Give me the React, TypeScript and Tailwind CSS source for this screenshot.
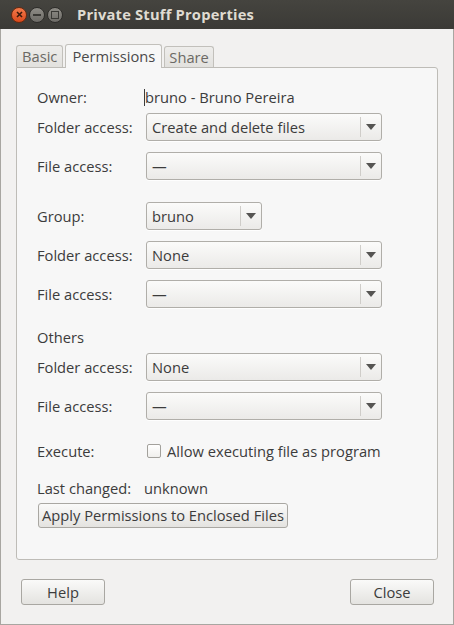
import React from 'react';

const font = { fontFamily: '"Open Sans", "Noto Sans", sans-serif' };

// little dropdown triangle used by the combo boxes
const Arrow = () => (
  <svg width="10" height="6" viewBox="0 0 10 6">
    <path d="M0 0h10L5 6z" fill="#555452" />
  </svg>
);

function Combo({ value, wide = true }: { value: string; wide?: boolean }) {
  return (
    <div
      className={`flex items-center h-[28px] ${wide ? 'w-[236px]' : 'w-[116px]'} rounded-[3px] border border-[#b0aea9] bg-gradient-to-b from-[#fbfbfa] to-[#ebeae8] shadow-[0_1px_0_rgba(255,255,255,0.8)]`}
    >
      <span className="flex-1 pl-[5px] text-[14.7px] text-[#3c3c3c] truncate">{value}</span>
      <span className="w-px h-[20px] bg-[#cfcdc9]" />
      <span className="w-[20px] flex items-center justify-center">
        <Arrow />
      </span>
    </div>
  );
}

function Row({ label, children, className = '' }: { label: string; children?: React.ReactNode; className?: string }) {
  return (
    <div className={`flex items-center ${className}`}>
      <div className="w-[109px] shrink-0 text-[14.7px] text-[#3c3c3c]">{label}</div>
      {children}
    </div>
  );
}

function WinBtn({ kind }: { kind: 'close' | 'min' | 'max' }) {
  if (kind === 'close') {
    return (
      <div className="w-[16px] h-[16px] rounded-full bg-gradient-to-b from-[#f37a4a] to-[#d9481a] border border-[#6a2a10] flex items-center justify-center">
        <svg width="7" height="7" viewBox="0 0 7 7">
          <path d="M1 1l5 5M6 1L1 6" stroke="#3a1a0c" strokeWidth="1.6" />
        </svg>
      </div>
    );
  }
  return (
    <div className="w-[16px] h-[16px] rounded-full bg-gradient-to-b from-[#8e8c86] to-[#6d6b66] border border-[#2e2d2a] flex items-center justify-center">
      {kind === 'min' ? (
        <div className="w-[8px] h-[2px] bg-[#3a3935]" />
      ) : (
        <div className="w-[8px] h-[8px] border-[1.5px] border-[#3a3935]" />
      )}
    </div>
  );
}

function Btn({ children, className = '' }: { children: React.ReactNode; className?: string }) {
  return (
    <div
      className={`flex items-center justify-center rounded-[3px] border border-[#a9a7a2] bg-gradient-to-b from-[#fafaf9] to-[#e4e3e0] text-[14.7px] text-[#3c3c3c] ${className}`}
    >
      {children}
    </div>
  );
}

export default function App() {
  return (
    <div className="w-[454px] h-[625px] flex flex-col bg-[#f2f1f0] overflow-hidden" style={font}>
      {/* title bar */}
      <div className="h-[29px] shrink-0 flex items-center bg-gradient-to-b from-[#45443f] to-[#3b3a36]">
        <div className="flex items-center gap-[2px] pl-[11px]">
          <WinBtn kind="close" />
          <WinBtn kind="min" />
          <WinBtn kind="max" />
        </div>
        <div className="ml-[14px] text-[14.7px] font-bold tracking-[0.2px] text-[#dfdbd2]">Private Stuff Properties</div>
      </div>

      <div className="flex-1 flex flex-col border-x border-b border-[#a8a6a1]">
        {/* tabs */}
        <div className="flex items-end h-[38px] pl-[15px] gap-[2px]">
          <div className="h-[22px] px-[5px] flex items-center rounded-t-[3px] border border-b-0 border-[#c2c0bb] bg-gradient-to-b from-[#eeedeb] to-[#e2e1de] text-[14.7px] text-[#6b6964]">
            Basic
          </div>
          <div className="relative z-10 h-[24px] mb-[-1px] px-[6px] flex items-center rounded-t-[3px] border border-b-0 border-[#c2c0bb] bg-[#f7f7f7] text-[14.7px] text-[#4a4a4a]">
            Permissions
          </div>
          <div className="h-[21px] px-[4px] flex items-center rounded-t-[3px] border border-b-0 border-[#c2c0bb] bg-gradient-to-b from-[#eeedeb] to-[#e2e1de] text-[14.7px] text-[#6b6964]">
            Share
          </div>
        </div>

        {/* permissions page */}
        <div className="mx-[15px] h-[493px] rounded-b-[3px] rounded-tr-[3px] border border-[#bebcb7] bg-[#f7f7f7] pl-[20px] pt-[18px]">
          <Row label="Owner:" className="h-[22px]">
            <div className="flex items-center text-[14.7px] text-[#3c3c3c] ml-[-2px]">
              <span className="w-px h-[17px] bg-[#3c3c3c]" />
              <span>bruno - Bruno Pereira</span>
            </div>
          </Row>
          <Row label="Folder access:" className="mt-[5px]">
            <Combo value="Create and delete files" />
          </Row>
          <Row label="File access:" className="mt-[11px]">
            <Combo value="—" />
          </Row>

          <Row label="Group:" className="mt-[22px]">
            <Combo value="bruno" wide={false} />
          </Row>
          <Row label="Folder access:" className="mt-[11px]">
            <Combo value="None" />
          </Row>
          <Row label="File access:" className="mt-[11px]">
            <Combo value="—" />
          </Row>

          <Row label="Others" className="mt-[18px] h-[22px]" />
          <Row label="Folder access:" className="mt-[5px]">
            <Combo value="None" />
          </Row>
          <Row label="File access:" className="mt-[11px]">
            <Combo value="—" />
          </Row>

          <Row label="Execute:" className="mt-[20px] h-[22px]">
            <div className="flex items-center gap-[6px] ml-[1px]">
              <div className="w-[14px] h-[14px] rounded-[2px] border border-[#a3a19c] bg-gradient-to-b from-[#ffffff] to-[#f0efed]" />
              <span className="text-[14.7px] text-[#3c3c3c]">Allow executing file as program</span>
            </div>
          </Row>

          <div className="mt-[15px] h-[22px] flex items-center text-[14.7px] text-[#3c3c3c]">
            <span className="w-[107px]">Last changed:</span>
            <span>unknown</span>
          </div>

          <Btn className="mt-[4px] ml-[1px] w-[250px] h-[25px]">Apply Permissions to Enclosed Files</Btn>
        </div>

        {/* dialog buttons */}
        <div className="flex justify-between pl-[20px] pr-[19px] mt-[19px]">
          <Btn className="w-[84px] h-[26px]">Help</Btn>
          <Btn className="w-[84px] h-[26px]">Close</Btn>
        </div>
      </div>
    </div>
  );
}
